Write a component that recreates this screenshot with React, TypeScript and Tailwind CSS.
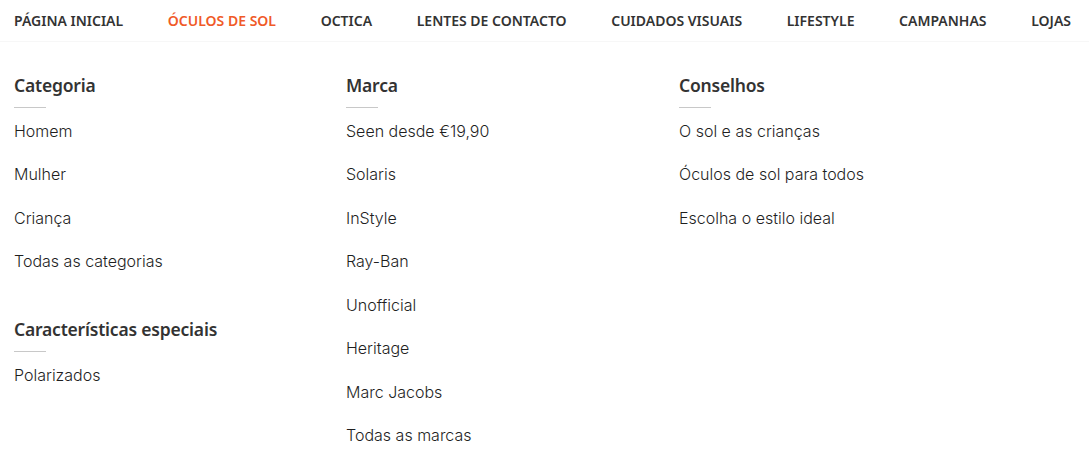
const navItems = [
  { label: "PÁGINA INICIAL" },
  { label: "ÓCULOS DE SOL", active: true },
  { label: "OCTICA" },
  { label: "LENTES DE CONTACTO" },
  { label: "CUIDADOS VISUAIS" },
  { label: "LIFESTYLE" },
  { label: "CAMPANHAS" },
  { label: "LOJAS" },
];

const columns = [
  [
    { title: "Categoria", links: ["Homem", "Mulher", "Criança", "Todas as categorias"] },
    { title: "Características especiais", links: ["Polarizados"] },
  ],
  [
    {
      title: "Marca",
      links: ["Seen desde €19,90", "Solaris", "InStyle", "Ray-Ban", "Unofficial", "Heritage", "Marc Jacobs", "Todas as marcas"],
    },
  ],
  [
    { title: "Conselhos", links: ["O sol e as crianças", "Óculos de sol para todos", "Escolha o estilo ideal"] },
  ],
];

function MenuGroup({ title, links }: { title: string; links: string[] }) {
  return (
    <div className="mb-[34px]">
      <h3 className="h-6 font-['Noto_Sans',sans-serif] text-[17.5px] leading-6 font-semibold tracking-[-0.2px] text-[#333]">
        {title}
      </h3>
      <div className="mt-[10px] mb-px h-px w-8 bg-[#c8c8c8]" />
      <ul>
        {links.map((link) => (
          <li key={link} className="flex h-[43.5px] items-center">
            <a href="#" className="font-['Inter',sans-serif] text-[16px] font-light text-[#1f1f1f]">
              {link}
            </a>
          </li>
        ))}
      </ul>
    </div>
  );
}

export default function App() {
  return (
    <main className="h-[465px] w-full overflow-hidden bg-white">
      {/* Top navigation */}
      <nav className="flex h-[42px] items-center justify-between border-b border-[#f7f7f7] pr-[18px] pl-[14px] pb-px">
        {navItems.map((item) => (
          <a
            key={item.label}
            href="#"
            className={`font-['Noto_Sans',sans-serif] text-[14px] font-semibold ${
              item.active ? "text-[#f05a28]" : "text-[#333]"
            }`}
          >
            {item.label}
          </a>
        ))}
      </nav>

      {/* Mega menu */}
      <div className="mt-[31px] grid grid-cols-[332px_333px_1fr] pl-[14px]">
        {columns.map((groups, i) => (
          <div key={i}>
            {groups.map((g) => (
              <MenuGroup key={g.title} {...g} />
            ))}
          </div>
        ))}
      </div>
    </main>
  );
}
